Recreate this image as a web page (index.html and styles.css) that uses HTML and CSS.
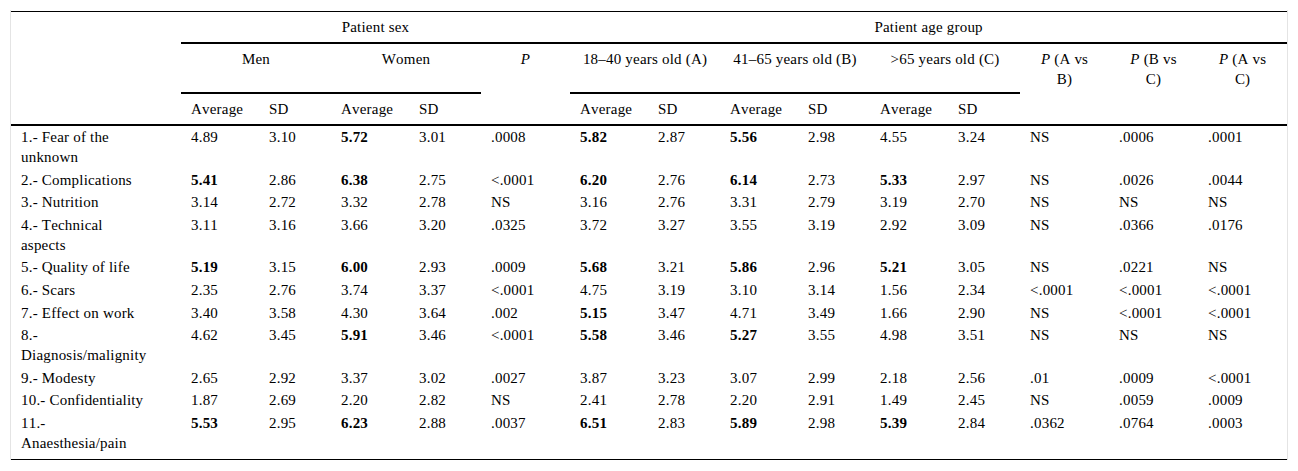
FILE: index.html
```html
<!DOCTYPE html>
<html lang="en">
<head>
<meta charset="utf-8">
<title>Patient concerns by sex and age group</title>
<link rel="stylesheet" href="styles.css">
</head>
<body>
<div class="wrap">
<table class="stats">
<colgroup>
<col class="c-label">
<col class="c-avg"><col class="c-sd"><col class="c-avg"><col class="c-sd"><col class="c-p">
<col class="c-avg"><col class="c-sd"><col class="c-avg"><col class="c-sd"><col class="c-avg"><col class="c-sd">
<col class="c-p"><col class="c-p"><col class="c-p">
</colgroup>
<thead>
<tr>
<th rowspan="3" class="blank"></th>
<th colspan="5" class="grp">Patient sex</th>
<th colspan="9" class="grp">Patient age group</th>
</tr>
<tr>
<th colspan="2" class="sub">Men</th>
<th colspan="2" class="sub">Women</th>
<th rowspan="2" class="pcol"><i>P</i></th>
<th colspan="2" class="sub">18–40 years old (A)</th>
<th colspan="2" class="sub">41–65 years old (B)</th>
<th colspan="2" class="sub">&gt;65 years old (C)</th>
<th rowspan="2" class="pcol narrow"><i>P</i> (A vs B)</th>
<th rowspan="2" class="pcol narrow"><i>P</i> (B vs C)</th>
<th rowspan="2" class="pcol narrow"><i>P</i> (A vs C)</th>
</tr>
<tr>
<th class="lbl">Average</th><th class="lbl">SD</th>
<th class="lbl">Average</th><th class="lbl">SD</th>
<th class="lbl">Average</th><th class="lbl">SD</th>
<th class="lbl">Average</th><th class="lbl">SD</th>
<th class="lbl">Average</th><th class="lbl">SD</th>
</tr>
</thead>
<tbody>
<tr><td class="name">1.- Fear of the unknown</td><td>4.89</td><td>3.10</td><td><b>5.72</b></td><td>3.01</td><td>.0008</td><td><b>5.82</b></td><td>2.87</td><td><b>5.56</b></td><td>2.98</td><td>4.55</td><td>3.24</td><td>NS</td><td>.0006</td><td>.0001</td></tr>
<tr><td class="name">2.- Complications</td><td><b>5.41</b></td><td>2.86</td><td><b>6.38</b></td><td>2.75</td><td>&lt;.0001</td><td><b>6.20</b></td><td>2.76</td><td><b>6.14</b></td><td>2.73</td><td><b>5.33</b></td><td>2.97</td><td>NS</td><td>.0026</td><td>.0044</td></tr>
<tr><td class="name">3.- Nutrition</td><td>3.14</td><td>2.72</td><td>3.32</td><td>2.78</td><td>NS</td><td>3.16</td><td>2.76</td><td>3.31</td><td>2.79</td><td>3.19</td><td>2.70</td><td>NS</td><td>NS</td><td>NS</td></tr>
<tr><td class="name">4.- Technical aspects</td><td>3.11</td><td>3.16</td><td>3.66</td><td>3.20</td><td>.0325</td><td>3.72</td><td>3.27</td><td>3.55</td><td>3.19</td><td>2.92</td><td>3.09</td><td>NS</td><td>.0366</td><td>.0176</td></tr>
<tr><td class="name">5.- Quality of life</td><td><b>5.19</b></td><td>3.15</td><td><b>6.00</b></td><td>2.93</td><td>.0009</td><td><b>5.68</b></td><td>3.21</td><td><b>5.86</b></td><td>2.96</td><td><b>5.21</b></td><td>3.05</td><td>NS</td><td>.0221</td><td>NS</td></tr>
<tr><td class="name">6.- Scars</td><td>2.35</td><td>2.76</td><td>3.74</td><td>3.37</td><td>&lt;.0001</td><td>4.75</td><td>3.19</td><td>3.10</td><td>3.14</td><td>1.56</td><td>2.34</td><td>&lt;.0001</td><td>&lt;.0001</td><td>&lt;.0001</td></tr>
<tr><td class="name">7.- Effect on work</td><td>3.40</td><td>3.58</td><td>4.30</td><td>3.64</td><td>.002</td><td><b>5.15</b></td><td>3.47</td><td>4.71</td><td>3.49</td><td>1.66</td><td>2.90</td><td>NS</td><td>&lt;.0001</td><td>&lt;.0001</td></tr>
<tr><td class="name">8.- Diagnosis/malignity</td><td>4.62</td><td>3.45</td><td><b>5.91</b></td><td>3.46</td><td>&lt;.0001</td><td><b>5.58</b></td><td>3.46</td><td><b>5.27</b></td><td>3.55</td><td>4.98</td><td>3.51</td><td>NS</td><td>NS</td><td>NS</td></tr>
<tr><td class="name">9.- Modesty</td><td>2.65</td><td>2.92</td><td>3.37</td><td>3.02</td><td>.0027</td><td>3.87</td><td>3.23</td><td>3.07</td><td>2.99</td><td>2.18</td><td>2.56</td><td>.01</td><td>.0009</td><td>&lt;.0001</td></tr>
<tr><td class="name">10.- Confidentiality</td><td>1.87</td><td>2.69</td><td>2.20</td><td>2.82</td><td>NS</td><td>2.41</td><td>2.78</td><td>2.20</td><td>2.91</td><td>1.49</td><td>2.45</td><td>NS</td><td>.0059</td><td>.0009</td></tr>
<tr class="last"><td class="name">11.- Anaesthesia/pain</td><td><b>5.53</b></td><td>2.95</td><td><b>6.23</b></td><td>2.88</td><td>.0037</td><td><b>6.51</b></td><td>2.83</td><td><b>5.89</b></td><td>2.98</td><td><b>5.39</b></td><td>2.84</td><td>.0362</td><td>.0764</td><td>.0003</td></tr>
</tbody>
</table>
</div>
</body>
</html>
```

FILE: styles.css
```css
html, body {
  margin: 0;
  padding: 0;
  background: #ffffff;
}

body {
  font-family: "Liberation Serif", "Times New Roman", serif;
  font-size: 15px;
  line-height: 20px;
  color: #000000;
  font-kerning: none;
  letter-spacing: 0.2px;
}

.wrap {
  margin: 10px 0 0 10px;
  width: 1276px;
  padding-top: 1px;
  border-left: 1px solid #e4e4e4;
  border-right: 1px solid #e4e4e4;
}

.stats {
  width: 1276px;
  table-layout: fixed;
  border-collapse: separate;
  border-spacing: 0;
  border-top: 1px solid #000000;
}

.c-label { width: 170px; }
.c-avg { width: 78px; }
.c-sd { width: 72px; }
.c-p { width: 89px; }

.stats th {
  font-weight: normal;
  vertical-align: top;
  padding: 5px 10px;
  border-bottom: 2px solid #000000;
}

.stats th.grp {
  text-align: center;
}

.stats th.sub {
  text-align: center;
  padding: 5px 10px 23px;
}

.stats th.pcol {
  text-align: center;
  padding: 5px 10px;
}

.stats th.narrow {
  padding: 5px 17px;
}

.stats th.lbl {
  text-align: left;
}

.stats td {
  text-align: left;
  vertical-align: top;
  padding: 1px 10px 1.6px;
}

.stats td.name {
  padding-right: 32px;
}

.stats b {
  font-weight: bold;
}

.stats tr.last td {
  padding-bottom: 6px;
  border-bottom: 1px solid #000000;
}
```
